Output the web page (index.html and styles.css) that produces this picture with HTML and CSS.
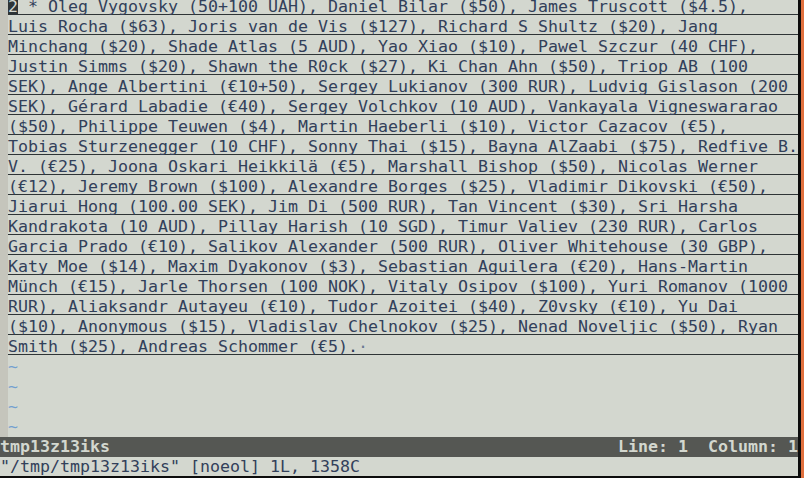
FILE: index.html
```html
<!DOCTYPE html>
<html>
<head>
<meta charset="utf-8">
<link rel="stylesheet" href="styles.css">
</head>
<body>
<div class="desktop">
  <div class="window">
    <div class="content">
      <div class="editor">
        <div class="gutter"></div>
        <div class="text">
          <div class="row first"><span class="cursor">2</span> * Oleg Vygovsky (50+100 UAH), Daniel Bilar ($50), James Truscott ($4.5),</div>
          <div class="row">Luis Rocha ($63), Joris van de Vis ($127), Richard S Shultz ($20), Jang</div>
          <div class="row">Minchang ($20), Shade Atlas (5 AUD), Yao Xiao ($10), Pawel Szczur (40 CHF),</div>
          <div class="row">Justin Simms ($20), Shawn the R0ck ($27), Ki Chan Ahn ($50), Triop AB (100</div>
          <div class="row">SEK), Ange Albertini (€10+50), Sergey Lukianov (300 RUR), Ludvig Gislason (200</div>
          <div class="row">SEK), Gérard Labadie (€40), Sergey Volchkov (10 AUD), Vankayala Vigneswararao</div>
          <div class="row">($50), Philippe Teuwen ($4), Martin Haeberli ($10), Victor Cazacov (€5),</div>
          <div class="row">Tobias Sturzenegger (10 CHF), Sonny Thai ($15), Bayna AlZaabi ($75), Redfive B.</div>
          <div class="row">V. (€25), Joona Oskari Heikkilä (€5), Marshall Bishop ($50), Nicolas Werner</div>
          <div class="row">(€12), Jeremy Brown ($100), Alexandre Borges ($25), Vladimir Dikovski (€50),</div>
          <div class="row">Jiarui Hong (100.00 SEK), Jim Di (500 RUR), Tan Vincent ($30), Sri Harsha</div>
          <div class="row">Kandrakota (10 AUD), Pillay Harish (10 SGD), Timur Valiev (230 RUR), Carlos</div>
          <div class="row">Garcia Prado (€10), Salikov Alexander (500 RUR), Oliver Whitehouse (30 GBP),</div>
          <div class="row">Katy Moe ($14), Maxim Dyakonov ($3), Sebastian Aguilera (€20), Hans-Martin</div>
          <div class="row">Münch (€15), Jarle Thorsen (100 NOK), Vitaly Osipov ($100), Yuri Romanov (1000</div>
          <div class="row">RUR), Aliaksandr Autayeu (€10), Tudor Azoitei ($40), Z0vsky (€10), Yu Dai</div>
          <div class="row">($10), Anonymous ($15), Vladislav Chelnokov ($25), Nenad Noveljic ($50), Ryan</div>
          <div class="row">Smith ($25), Andreas Schommer (€5).<span class="eol">·</span></div>
          <div class="row tilde">~</div>
          <div class="row tilde">~</div>
          <div class="row tilde">~</div>
          <div class="row tilde">~</div>
        </div>
      </div>
      <div class="status">
        <span>tmp13z13iks</span>
        <span>Line: 1  Column: 1</span>
      </div>
      <div class="cmdline">"/tmp/tmp13z13iks" [noeol] 1L, 1358C</div>
    </div>
  </div>
</div>
</body>
</html>
```
FILE: styles.css
```css
html, body {
  margin: 0;
  padding: 0;
}
body {
  width: 804px;
  height: 478px;
  overflow: hidden;
  background: #e0703e;
}
.desktop {
  width: 804px;
  height: 478px;
}
.window {
  width: 801px;
  height: 478px;
  box-sizing: border-box;
  padding: 0 3px 2px 0;
  background: #0c0c0c;
}
.content {
  width: 798px;
  height: 476px;
  display: flex;
  flex-direction: column;
  background: #d3d7cf;
  font-family: "DejaVu Sans Mono", monospace;
  font-size: 16.61px;
  color: #32405a;
  overflow: hidden;
}
.editor {
  height: 437px;
  display: flex;
  overflow: hidden;
}
.gutter {
  width: 8px;
  flex: none;
  background: #c5c5bc;
}
.text {
  flex: 1;
}
.row {
  height: 20px;
  box-sizing: border-box;
  padding-top: 4px;
  line-height: 15px;
  white-space: pre;
  border-bottom: 1px solid #2e3436;
}
.row.first {
  height: 15px;
  padding-top: 0;
  line-height: 14px;
}
.row.tilde {
  border-bottom: none;
  color: #729fcf;
}
.cursor {
  background: #2e3436;
  color: #d3d7cf;
  display: inline-block;
  height: 14px;
  line-height: 14px;
  vertical-align: top;
}
.eol {
  color: #6b7b94;
}
.status {
  height: 20px;
  flex: none;
  display: flex;
  justify-content: space-between;
  align-items: center;
  background: #555753;
  color: #d3d7cf;
  font-weight: bold;
  line-height: 20px;
  white-space: pre;
}
.cmdline {
  height: 19px;
  flex: none;
  line-height: 19px;
  white-space: pre;
  color: #32405a;
}
```
